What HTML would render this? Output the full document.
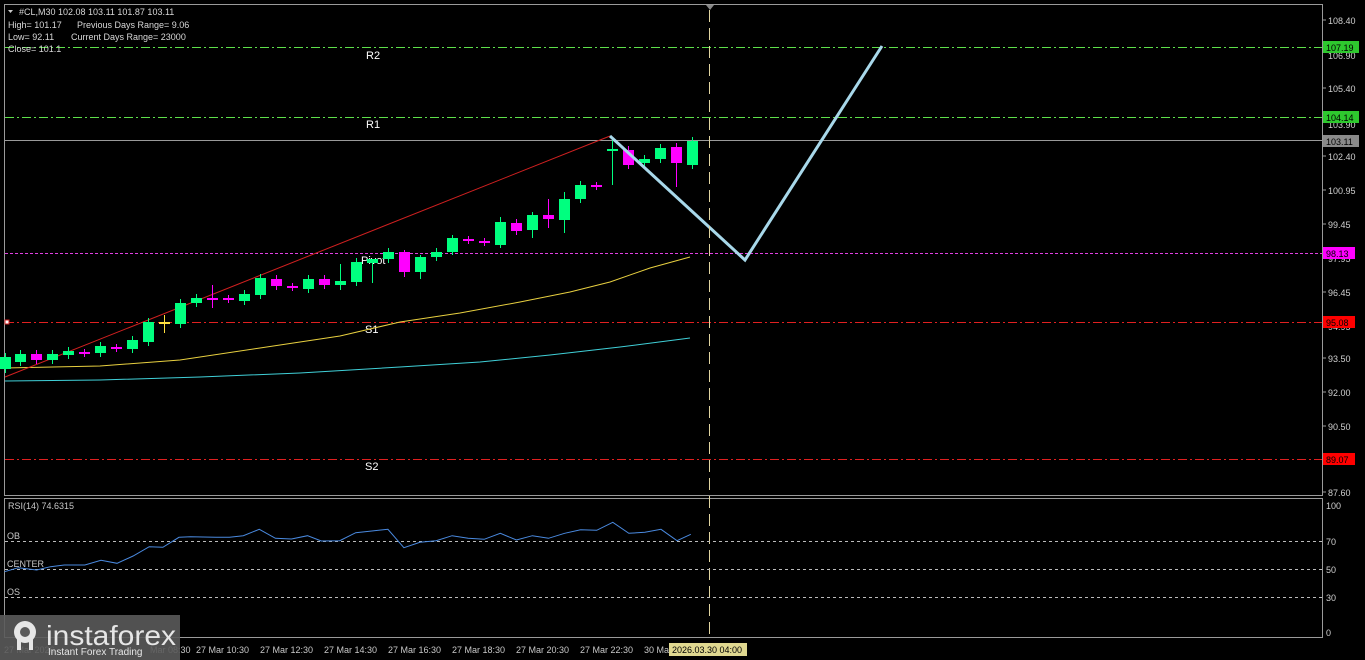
<!DOCTYPE html>
<html><head><meta charset="utf-8"><style>
html,body{margin:0;padding:0;background:#000;width:1365px;height:660px;overflow:hidden}
svg{display:block}
text{font-family:"Liberation Sans",sans-serif}
</style></head><body>
<svg id="s" width="1365" height="660" viewBox="0 0 1365 660" xmlns="http://www.w3.org/2000/svg">
<rect width="1365" height="660" fill="#000"/>
<rect x="4.5" y="4.5" width="1318" height="491" fill="none" stroke="#9a9a9a"/>
<rect x="4.5" y="498.5" width="1318" height="139" fill="none" stroke="#9a9a9a"/>
<line x1="5" y1="47.5" x2="1322" y2="47.5" stroke="#5ee04a" stroke-dasharray="9,3,2,3"/>
<line x1="5" y1="117.5" x2="1322" y2="117.5" stroke="#5ee04a" stroke-dasharray="9,3,2,3"/>
<line x1="5" y1="140.5" x2="1322" y2="140.5" stroke="#9a9a9a"/>
<line x1="5" y1="253.5" x2="1322" y2="253.5" stroke="#e040e0" stroke-dasharray="3,2"/>
<line x1="5" y1="322.5" x2="1322" y2="322.5" stroke="#e02020" stroke-dasharray="9,3,2,3"/>
<line x1="5" y1="459.5" x2="1322" y2="459.5" stroke="#e02020" stroke-dasharray="9,3,2,3"/>
<rect x="5" y="320" width="4" height="4" fill="#fff" stroke="#d02020"/>
<g fill="#fff" font-size="11">
<text x="366" y="59">R2</text><text x="366" y="128">R1</text>
<text x="361" y="264">Pivot</text><text x="365" y="333">S1</text><text x="365" y="470">S2</text>
</g>
<polyline fill="none" stroke="#e8d040" stroke-width="1" points="5,368 100,366 180,360 260,348 340,336 400,322 460,313 520,302 570,292 610,282 650,268 690,257"/>
<polyline fill="none" stroke="#40d0d8" stroke-width="1" points="5,381 100,380 200,377 300,373 400,367 480,362 550,355 620,347 690,338"/>
<line x1="5" y1="377" x2="610" y2="136" stroke="#d02020" stroke-width="1"/>
<g id="candles"></g>
<polyline fill="none" stroke="#a8d8ea" stroke-width="3" points="610,136 745,260 882,46"/>
<line x1="709.5" y1="10" x2="709.5" y2="636" stroke="#e0d4a0" stroke-dasharray="12,6"/>
<polygon points="706,5 714,5 710,10" fill="#888"/>
<g fill="#d8d8d8" font-size="9">
<polygon points="8,10 13,10 10.5,13" fill="#ccc"/>
<text x="19" y="15">#CL,M30  102.08 103.11 101.87 103.11</text>
<text x="8" y="28">High= 101.17</text><text x="77" y="28">Previous Days Range= 9.06</text>
<text x="8" y="40">Low= 92.11</text><text x="71" y="40">Current Days Range= 23000</text>
<text x="8" y="52">Close= 101.1</text>
</g>
<g fill="#cfcfcf" font-size="9">
<g stroke="#9a9a9a"><line x1="1322" y1="20" x2="1326" y2="20"/><line x1="1322" y1="88" x2="1326" y2="88"/><line x1="1322" y1="156" x2="1326" y2="156"/><line x1="1322" y1="190" x2="1326" y2="190"/><line x1="1322" y1="224" x2="1326" y2="224"/><line x1="1322" y1="292" x2="1326" y2="292"/><line x1="1322" y1="358" x2="1326" y2="358"/><line x1="1322" y1="392" x2="1326" y2="392"/><line x1="1322" y1="426" x2="1326" y2="426"/><line x1="1322" y1="492" x2="1326" y2="492"/></g>
<text x="1328" y="24">108.40</text><text x="1328" y="59">106.90</text><text x="1328" y="92">105.40</text><text x="1328" y="128">103.90</text>
<text x="1328" y="160">102.40</text><text x="1328" y="194">100.95</text><text x="1328" y="228">99.45</text><text x="1328" y="262">97.95</text>
<text x="1328" y="296">96.45</text><text x="1328" y="330">94.95</text><text x="1328" y="362">93.50</text><text x="1328" y="396">92.00</text>
<text x="1328" y="430">90.50</text><text x="1328" y="496">87.60</text>
<rect x="1323" y="41" width="36" height="12" fill="#2ec82e"/><text x="1326" y="51" fill="#000">107.19</text>
<rect x="1323" y="111" width="36" height="12" fill="#2ec82e"/><text x="1326" y="121" fill="#000">104.14</text>
<rect x="1323" y="135" width="36" height="12" fill="#8a8a8a"/><text x="1326" y="145" fill="#000">103.11</text>
<rect x="1323" y="247" width="32" height="12" fill="#ff00ff"/><text x="1326" y="257" fill="#000">98.13</text>
<rect x="1323" y="316" width="32" height="12" fill="#ff0000"/><text x="1326" y="326" fill="#000">95.08</text>
<rect x="1323" y="453" width="32" height="12" fill="#ff0000"/><text x="1326" y="463" fill="#000">89.07</text>
<text x="1326" y="509">100</text><text x="1326" y="545">70</text><text x="1326" y="573">50</text><text x="1326" y="601">30</text><text x="1326" y="636">0</text>
</g>
<g stroke="#bbb" stroke-dasharray="3,3"><line x1="5" y1="541.5" x2="1322" y2="541.5"/><line x1="5" y1="569.5" x2="1322" y2="569.5"/><line x1="5" y1="597.5" x2="1322" y2="597.5"/></g>
<g fill="#c8c8c8" font-size="9"><text x="8" y="509">RSI(14) 74.6315</text><text x="7" y="539">OB</text><text x="7" y="567">CENTER</text><text x="7" y="595">OS</text></g>
<polyline id="rsi" fill="none" stroke="#4a8ae0" stroke-width="1"/>
<g fill="#c8c8c8" font-size="9">
<text x="196" y="653">27 Mar 10:30</text><text x="260" y="653">27 Mar 12:30</text><text x="324" y="653">27 Mar 14:30</text><text x="388" y="653">27 Mar 16:30</text><text x="452" y="653">27 Mar 18:30</text><text x="516" y="653">27 Mar 20:30</text><text x="580" y="653">27 Mar 22:30</text><text x="644" y="653">30 Ma</text>
<text x="4" y="653">27 Mar 2026</text><text x="150" y="653">Mar 08:30</text>
</g>
<rect x="669" y="643" width="78" height="13" fill="#e0d890"/><text x="672" y="653" font-size="9" fill="#000">2026.03.30 04:00</text>
<rect x="0" y="615" width="180" height="45" fill="#5a5a5a" fill-opacity="0.9"/>
<g fill="#e6e6e6">
<circle cx="25" cy="632" r="11"/>
<circle cx="25" cy="632" r="5" fill="#5a5a5a"/>
<rect x="17" y="636" width="4" height="14"/><rect x="29" y="636" width="4" height="14"/>
<text x="46" y="645" font-size="28" textLength="130" lengthAdjust="spacingAndGlyphs">instaforex</text>
<text x="48" y="655" font-size="10">Instant Forex Trading</text>
</g>
</svg>
<script>
var c=[[5,357,369,1],[20,354,362,1],[36,354,360,0],[52,354,360,1],[68,351,355,1],[84,353,353,2],[100,346,353,1],[116,348,348,2],[132,340,349,1],[148,322,342,1],[164,323,323,3],[180,303,324,1],[196,298,303,1],[212,299,299,2],[228,299,299,2],[244,294,301,1],[260,278,295,1],[276,279,286,0],[292,287,287,2],[308,279,289,1],[324,279,285,0],[340,281,285,1],[356,262,282,1],[372,259,263,1],[388,252,259,1],[404,252,272,0],[420,257,272,1],[436,252,257,1],[452,238,252,1],[468,240,240,2],[484,242,242,2],[500,222,245,1],[516,223,231,0],[532,215,230,1],[548,215,219,0],[564,199,220,1],[580,185,199,1],[596,186,186,2],[612,150,151,1],[628,150,165,0],[644,159,163,1],[660,148,159,1],[676,147,163,0],[692,141,165,1]];
var wk={340:[264,290],372:[259,283],212:[285,308],548:[199,228],612:[137,185],676:[143,187],164:[315,333],404:[250,277],420:[255,279],500:[217,248],532:[212,238],564:[192,233],452:[235,255]};
var g=document.getElementById('candles'),h='';
c.forEach(function(a){var x=a[0],t=a[1],b=a[2],k=a[3];var col=k==1?'#00ff7f':(k==3?'#ffe040':'#ff00ff');
var w=wk[x]||[t-4,b+4];h+='<line x1="'+(x+.5)+'" y1="'+w[0]+'" x2="'+(x+.5)+'" y2="'+w[1]+'" stroke="'+col+'"/>';
if(b-t<2){h+='<rect x="'+(x-5)+'" y="'+(t-1)+'" width="11" height="2" fill="'+col+'"/>';}
else h+='<rect x="'+(x-5)+'" y="'+t+'" width="11" height="'+(b-t)+'" fill="'+col+'"/>';});
g.innerHTML=h;
var zx=[10,40,80,110,140,185,220,255,290,325,355,390,415,470,500,530,565,600,635,670,700,740,775,810,845,880,915,950,985,1020,1055,1090,1125,1160,1195,1230,1265,1300,1335,1370,1405,1440,1475,1505];
var zy=[230,218,225,215,210,210,196,205,183,155,157,127,125,127,127,122,103,130,132,122,138,137,113,108,103,158,142,137,122,130,133,115,135,122,130,115,104,106,82,115,112,103,137,118];
var p=zx.map(function(x,i){return (x*0.459).toFixed(1)+','+(495+zy[i]/3).toFixed(1)}).join(' ');
document.getElementById('rsi').setAttribute('points',p);
</script>
</body></html>
